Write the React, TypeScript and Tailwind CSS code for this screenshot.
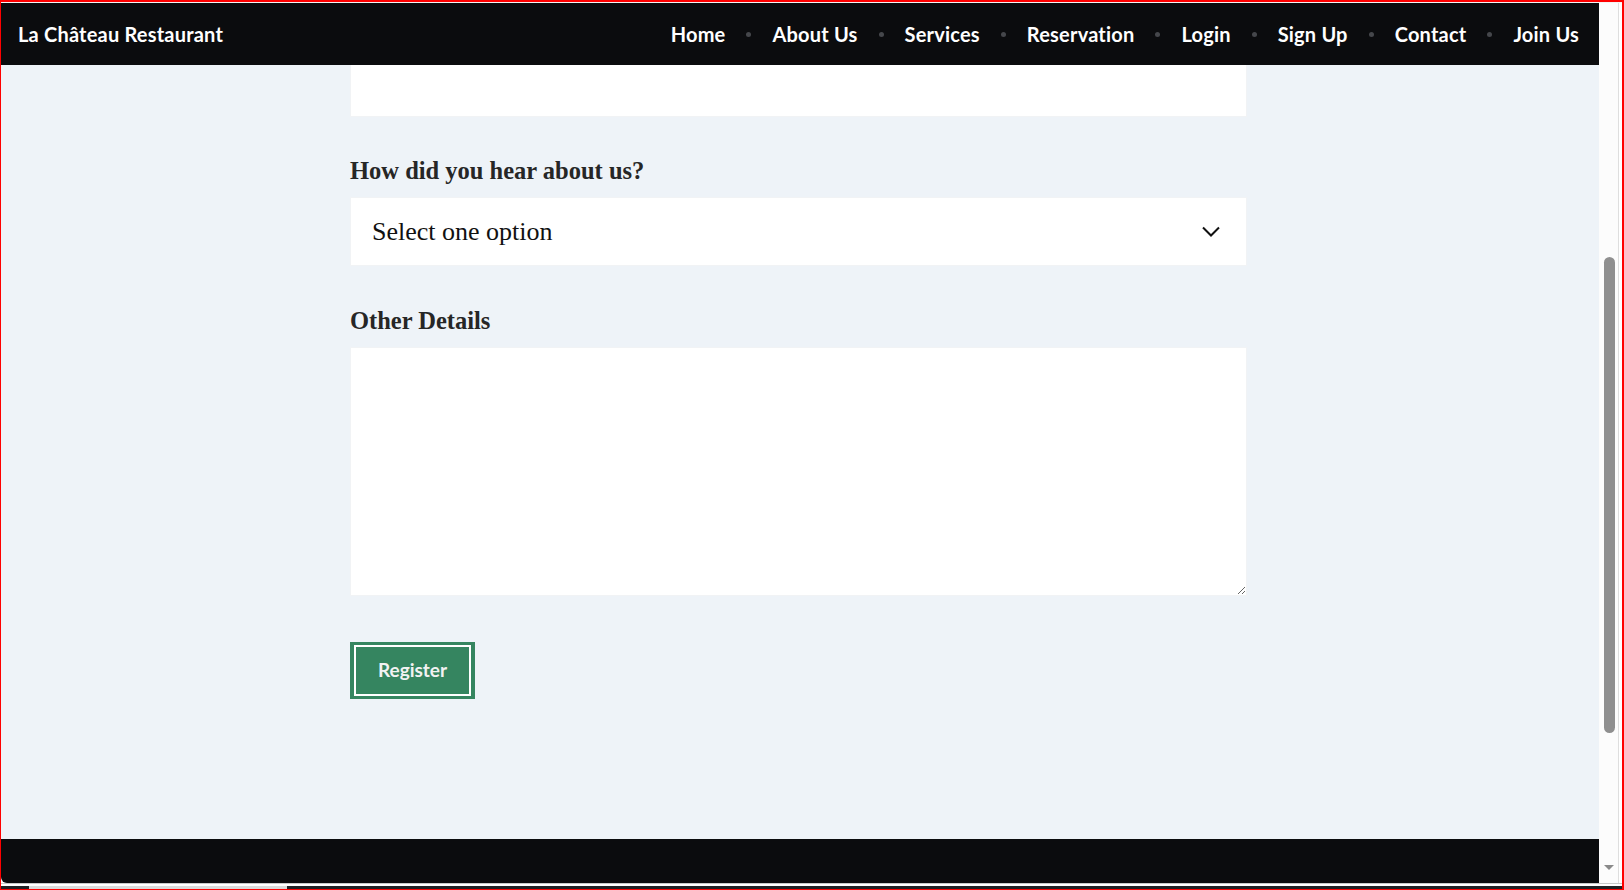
import React from 'react';

const navLinks = ['Home', 'About Us', 'Services', 'Reservation', 'Login', 'Sign Up', 'Contact', 'Join Us'];

const sans = { fontFamily: 'Lato, "Open Sans", sans-serif' };
const serif = { fontFamily: '"Liberation Serif", "Times New Roman", serif' };

const Navbar: React.FC = () => (
  <nav className="h-[62px] shrink-0 bg-[#0b0c0e] flex items-center justify-between pl-[17px] pr-[20px]" style={sans}>
    <a href="#" className="text-white font-bold text-[20px] tracking-[0.2px]">La Château Restaurant</a>
    <ul className="flex items-center">
      {navLinks.map((link, i) => (
        <li key={link} className="flex items-center">
          {i > 0 && <span className="mx-[21px] w-[5px] h-[5px] rounded-full bg-[#45474b]" />}
          <a href="#" className="text-white font-bold text-[20px] tracking-[0.2px]">{link}</a>
        </li>
      ))}
    </ul>
  </nav>
);

const Scrollbar: React.FC = () => (
  <div className="w-[23px] shrink-0 flex bg-white rounded-br-[6px]">
    <div className="w-[19px] flex flex-col items-center bg-[#fcfcfc]">
      <div className="h-[254px] shrink-0" />
      <div className="w-[11px] h-[476px] rounded-full bg-[#8f8f8f] ml-[1px]" />
      <div className="flex-1" />
      <div className="w-0 h-0 border-l-[5px] border-r-[5px] border-t-[5px] border-l-transparent border-r-transparent border-t-[#8a8a8a] ml-[1px] mb-[13px]" />
    </div>
    <div className="w-px bg-[#dedede]" />
    <div className="flex-1 bg-white" />
  </div>
);

const RegisterForm: React.FC = () => (
  <form className="w-[897px] ml-[349px]" onSubmit={(e) => e.preventDefault()}>
    {/* bottom part of the previous field, scrolled under the navbar */}
    <div className="h-[52px] bg-white border-x border-b border-[#f1f3f5]" />

    <label className="block mt-[38px] mb-[10px] text-[24.5px] leading-[32px] font-bold text-[#262626]" style={serif}>
      How did you hear about us?
    </label>
    <div className="h-[69px] bg-white border border-[#f1f3f5] flex items-center justify-between pl-[21px] pr-[26px]">
      <span className="text-[26px] text-[#111]" style={serif}>Select one option</span>
      <svg width="18" height="11" viewBox="0 0 18 11" fill="none">
        <path d="M1 1.5 L9 9.5 L17 1.5" stroke="#111" strokeWidth="2" />
      </svg>
    </div>

    <label className="block mt-[39px] mb-[10px] text-[24.5px] leading-[32px] font-bold text-[#262626]" style={serif}>
      Other Details
    </label>
    <textarea className="block w-full h-[249px] bg-white border border-[#f1f3f5] resize-y outline-none" />

    <button
      type="submit"
      className="mt-[46px] w-[125px] h-[57px] bg-[#358560] px-[4px] py-[3px] flex"
      style={sans}
    >
      <span className="flex-1 border-2 border-white flex items-center justify-center text-[#f2f2f2] font-bold text-[19px]">
        Register
      </span>
    </button>
  </form>
);

export default function App() {
  return (
    <div className="w-[1624px] h-[890px] overflow-hidden border-t-2 border-l border-r-2 border-b border-[#ff0000] bg-white flex flex-col">
      <div className="h-px shrink-0 bg-[#f4f4f4]" />
      <div className="flex h-[880px] shrink-0">
        <div className="w-[1598px] flex flex-col bg-[#eef3f8] rounded-bl-[6px] overflow-hidden">
          <Navbar />
          <main className="flex-1">
            <RegisterForm />
          </main>
          <footer className="h-[44px] shrink-0 bg-[#0b0c0e]" />
        </div>
        <Scrollbar />
      </div>
      <div className="h-px shrink-0 bg-[#c9c9c9]" />
      <div className="h-[2px] shrink-0 bg-white" />
      <div className="h-[3px] shrink-0 flex">
        <div className="w-[28px] bg-[#202124]" />
        <div className="w-[258px] bg-[#d9d9d9]" />
        <div className="flex-1 bg-[#202124]" />
      </div>
    </div>
  );
}
